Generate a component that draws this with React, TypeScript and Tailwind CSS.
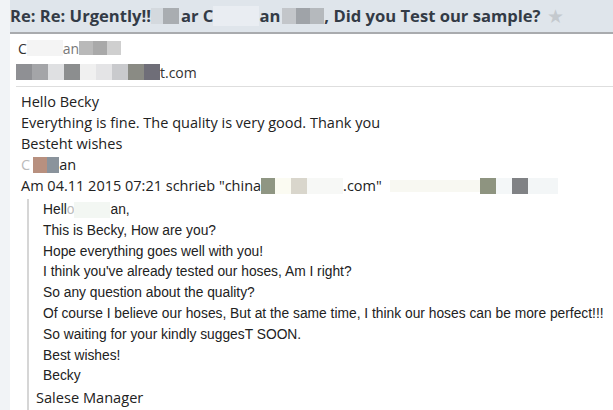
import React from "react";

const M = ({ c, w = 16, h = 15, o = "" }: { c: string; w?: number; h?: number; o?: string }) => (
  <span
    className={"inline-block align-middle " + o}
    style={{ background: c, width: w, height: h }}
  />
);

export default function App() {
  return (
    <div className="flex w-[613px] h-[410px] bg-white overflow-hidden text-[#222]" style={{ fontFamily: '"Open Sans", "Noto Sans", sans-serif' }}>
      <div className="w-[10px] shrink-0 bg-[#f1f3f6]" />
      <div className="flex-1 flex flex-col min-w-0">
        <div className="h-[34px] shrink-0 bg-[#dfe5eb] border-b-2 border-[#a9abae] flex items-center whitespace-nowrap text-[16.6px] font-bold text-[#333b46]">
          <span>Re: Re: Urgently!!</span>
          <M c="#d4d9de" w={12} h={16} />
          <M c="#a9adb1" w={16} h={16} />
          <span className="ml-[2px]">ar C</span>
          <M c="#e9edf2" w={46} h={20} />
          <span>an</span>
          <M c="#c3c6ca" w={14} h={16} o="ml-[2px]" />
          <M c="#9fa3a8" w={14} h={16} />
          <M c="#b5b9bd" w={14} h={16} />
          <span>, Did you Test our sample?</span>
          <span className="ml-[6px] text-[19px] text-[#c4c9ce] font-normal">★</span>
        </div>
        <div className="ml-[6px] h-[53px] shrink-0 border-b border-[#dedede] flex flex-col justify-center text-[14px] text-[#333]">
          <div className="flex items-center h-[24px] whitespace-nowrap">
            <span className="ml-[2px]">C</span>
            <M c="#f4f4f4" w={36} h={16} />
            <span className="text-[#777]">an</span>
            <M c="#b9b9b9" w={14} h={14} />
            <M c="#a9a9a9" w={14} h={14} />
            <M c="#cfcfcf" w={14} h={14} />
          </div>
          <div className="flex items-center h-[24px] whitespace-nowrap">
            <M c="#8f9094" w={16} h={16} />
            <M c="#a4a5a8" w={16} h={16} />
            <M c="#dfe0e2" w={16} h={16} />
            <M c="#8c8e8f" w={16} h={16} />
            <M c="#f0f0f0" w={16} h={16} />
            <M c="#e4e4e6" w={16} h={16} />
            <M c="#c9cacd" w={16} h={16} />
            <M c="#8a8b84" w={16} h={16} />
            <M c="#6f6e78" w={16} h={16} />
            <span>t.com</span>
          </div>
        </div>
        <div className="pl-[11px] pt-[4px] text-[14.5px] leading-[21px] text-[#222]">
          <div>Hello Becky</div>
          <div>Everything is fine. The quality is very good. Thank you</div>
          <div>Besteht wishes</div>
          <div className="flex items-center">
            <span className="text-[#bbb]">C</span>
            <M c="#b8907f" w={14} h={16} o="ml-[3px]" />
            <M c="#8a939c" w={12} h={16} />
            <span>an</span>
          </div>
          <div className="flex items-center whitespace-nowrap">
            <span>Am 04.11 2015 07:21 schrieb "china</span>
            <M c="#8f9683" w={14} h={16} />
            <M c="#fbfbf2" w={16} h={16} />
            <M c="#d9d6cc" w={16} h={16} />
            <M c="#f7f8f6" w={36} h={16} />
            <span>.com"</span>
            <M c="#f8f8f2" w={90} h={12} o="ml-[8px]" />
            <M c="#8e9480" w={16} h={16} />
            <M c="#f4f7f8" w={16} h={16} />
            <M c="#808285" w={16} h={16} />
            <M c="#f3f6f7" w={30} h={16} />
          </div>
        </div>
        <div className="ml-[17px] mt-[3px] border-l-2 border-[#d6d6d6] flex-1 pt-[1px]">
          <div className="pl-[14px] text-[13.8px] leading-[20.8px] text-[#222]" style={{ fontFamily: '"Liberation Sans", "DejaVu Sans", sans-serif' }}>
            <div className="flex items-center">
              <span>Hell</span>
              <span className="text-[#bbb]">o</span>
              <M c="#f3f7f3" w={36} h={16} />
              <span>an,</span>
            </div>
            <div>This is Becky, How are you?</div>
            <div>Hope everything goes well with you!</div>
            <div>I think you've already tested our hoses, Am I right?</div>
            <div>So any question about the quality?</div>
            <div className="whitespace-nowrap">Of course I believe our hoses, But at the same time, I think our hoses can be more perfect!!!</div>
            <div>So waiting for your kindly suggesT SOON.</div>
            <div>Best wishes!</div>
            <div>Becky</div>
          </div>
          <div className="pl-[7px] text-[14.6px] leading-[21px] text-[#222]">Salese Manager</div>
        </div>
      </div>
    </div>
  );
}
